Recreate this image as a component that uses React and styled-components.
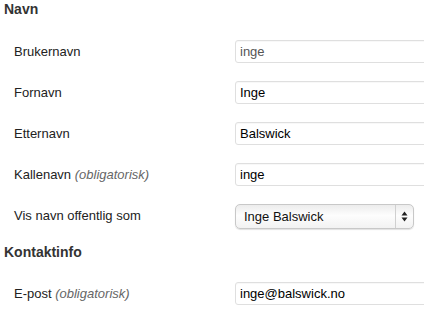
import React from 'react';
import styled, { createGlobalStyle } from 'styled-components';

const GlobalStyle = createGlobalStyle`
  html, body {
    margin: 0;
    padding: 0;
    background: #fff;
    font-family: "Liberation Sans", Arial, sans-serif;
    overflow: hidden;
  }
`;

const Page = styled.div`
  width: 424px;
  height: 313px;
  overflow: hidden;
`;

const SectionTitle = styled.h3`
  margin: ${(p) => (p.$first ? '0 0 13px' : '7px 0 12px')};
  padding-left: 4px;
  font-size: 14px;
  line-height: 18px;
  font-weight: bold;
  color: #333;
`;

const Row = styled.div`
  display: grid;
  grid-template-columns: 221px 1fr;
  align-items: center;
  height: 41px;
  padding-left: 14px;
`;

const Label = styled.label`
  font-size: 13px;
  color: #222;
  white-space: nowrap;
`;

const Hint = styled.span`
  font-style: italic;
  color: #666;
`;

const Input = styled.input`
  box-sizing: border-box;
  width: 240px;
  height: 23px;
  padding: 0 4px;
  border: 1px solid #dfdfdf;
  border-radius: 3px;
  background: #fff;
  font-family: "Liberation Sans", Arial, sans-serif;
  font-size: 13px;
  color: ${(p) => (p.$muted ? '#555' : '#000')};
  outline: none;
  box-shadow: inset 0 1px 1px rgba(0, 0, 0, 0.03);
`;

const Select = styled.div`
  box-sizing: border-box;
  position: relative;
  width: 179px;
  height: 25px;
  margin-top: 1px;
  border: 1px solid #c8c8c8;
  border-radius: 5px;
  background: linear-gradient(#ececec, #fdfdfd 45%, #f2f2f2 100%);
  box-shadow: 0 1px 1px rgba(0, 0, 0, 0.12);
  display: flex;
  align-items: center;
  padding-left: 8px;
  font-size: 13px;
  color: #111;
`;

const Stepper = styled.span`
  position: absolute;
  right: 0;
  top: 0;
  bottom: 0;
  width: 17px;
  border-left: 1px solid #d0d0d0;
  display: flex;
  align-items: center;
  justify-content: center;
`;

const Arrows = () => (
  <svg width="7" height="11" viewBox="0 0 7 11">
    <path d="M3.5 0.5 L6.5 4.5 L0.5 4.5 Z" fill="#222" />
    <path d="M3.5 10.5 L6.5 6.5 L0.5 6.5 Z" fill="#222" />
  </svg>
);

const App = () => (
  <Page>
    <GlobalStyle />
    <SectionTitle $first>Navn</SectionTitle>
    <Row>
      <Label>Brukernavn</Label>
      <Input defaultValue="inge" readOnly $muted />
    </Row>
    <Row>
      <Label>Fornavn</Label>
      <Input defaultValue="Inge" />
    </Row>
    <Row>
      <Label>Etternavn</Label>
      <Input defaultValue="Balswick" />
    </Row>
    <Row>
      <Label>
        Kallenavn <Hint>(obligatorisk)</Hint>
      </Label>
      <Input defaultValue="inge" />
    </Row>
    <Row>
      <Label>Vis navn offentlig som</Label>
      <Select>
        Inge Balswick
        <Stepper>
          <Arrows />
        </Stepper>
      </Select>
    </Row>
    <SectionTitle>Kontaktinfo</SectionTitle>
    <Row>
      <Label>
        E-post <Hint>(obligatorisk)</Hint>
      </Label>
      <Input defaultValue="inge@balswick.no" />
    </Row>
  </Page>
);

export default App;
